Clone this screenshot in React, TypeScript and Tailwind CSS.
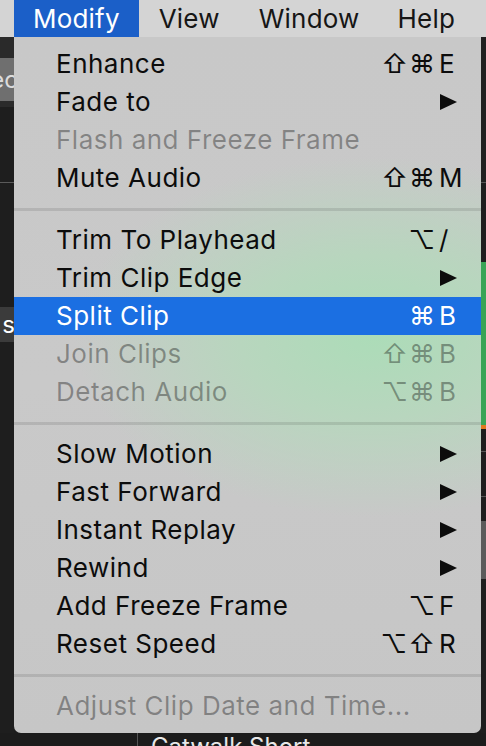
import React from "react";

type Item =
  | { kind: "item"; label: string; mods?: string; k?: string; arrow?: boolean; disabled?: boolean; active?: boolean }
  | { kind: "sep" };

const items: Item[] = [
  { kind: "item", label: "Enhance", mods: "⇧⌘", k: "E" },
  { kind: "item", label: "Fade to", arrow: true },
  { kind: "item", label: "Flash and Freeze Frame", disabled: true },
  { kind: "item", label: "Mute Audio", mods: "⇧⌘", k: "M" },
  { kind: "sep" },
  { kind: "item", label: "Trim To Playhead", mods: "⌥", k: "/" },
  { kind: "item", label: "Trim Clip Edge", arrow: true },
  { kind: "item", label: "Split Clip", mods: "⌘", k: "B", active: true },
  { kind: "item", label: "Join Clips", mods: "⇧⌘", k: "B", disabled: true },
  { kind: "item", label: "Detach Audio", mods: "⌥⌘", k: "B", disabled: true },
  { kind: "sep" },
  { kind: "item", label: "Slow Motion", arrow: true },
  { kind: "item", label: "Fast Forward", arrow: true },
  { kind: "item", label: "Instant Replay", arrow: true },
  { kind: "item", label: "Rewind", arrow: true },
  { kind: "item", label: "Add Freeze Frame", mods: "⌥", k: "F" },
  { kind: "item", label: "Reset Speed", mods: "⌥⇧", k: "R" },
  { kind: "sep" },
  { kind: "item", label: "Adjust Clip Date and Time...", disabled: true },
];

function Arrow() {
  return (
    <svg width="18" height="18" viewBox="0 0 18 18">
      <path d="M1 1 L18 9 L1 17 Z" fill="currentColor" />
    </svg>
  );
}

export default function App() {
  return (
    <div
      className="w-[486px] h-[746px] overflow-hidden bg-[#1c1c1c] flex flex-col"
      style={{ fontFamily: "Inter, 'DejaVu Sans', sans-serif" }}
    >
      {/* menubar */}
      <div className="h-[37px] shrink-0 bg-[#d4d4d4] flex text-[26px] leading-[37px] text-[#161616] pl-[14px] tracking-[0.2px]">
        <div className="px-[19px] bg-[#1b5fc8] text-white">Modify</div>
        <div className="px-[20px]">View</div>
        <div className="px-[19px]">Window</div>
        <div className="px-[19px]">Help</div>
      </div>

      <div className="flex h-[696px] shrink-0">
        {/* left strip */}
        <div className="w-[14px] shrink-0 flex flex-col">
          <div className="h-[21px] bg-[#2a2a2a]" />
          <div className="h-[43px] bg-[#6f6f6f] overflow-hidden flex items-center justify-end text-[24px] text-[#dcdcdc] leading-none">
            <span className="-mr-[4px]">ec</span>
          </div>
          <div className="h-[6px] bg-[#2b2b2b]" />
          <div className="h-[75px] bg-[#1e1e1e]" />
          <div className="h-px bg-[#5a5a5a]" />
          <div className="h-[124px] bg-[#1e1e1e]" />
          <div className="h-[35px] bg-[#3b3b3b] overflow-hidden flex items-center justify-end text-[24px] text-white leading-none">
            <span className="-mr-[1px]">s</span>
          </div>
          <div className="flex-1 bg-[#1e1e1e]" />
        </div>

        {/* menu */}
        <div className="w-[467px] shrink-0 rounded-b-[7px] overflow-hidden bg-[radial-gradient(ellipse_300px_180px_at_360px_300px,#acdcb8_0%,#b8d6be_45%,rgba(200,200,200,0)_100%),linear-gradient(180deg,#c8c8c8_0%,#c9c9c9_50%,#c6c6c6_100%)] pt-[8px] pb-[7px] text-[26px] tracking-[0.5px]">
          {items.map((it, i) =>
            it.kind === "sep" ? (
              <div key={i} className="h-[24px] flex items-center">
                <div className="h-[3px] w-full bg-black/10" />
              </div>
            ) : (
              <div
                key={i}
                className={
                  "h-[38px] flex items-center pl-[42px] pr-[20px] leading-none " +
                  (it.active ? "bg-[#1b6fe2] text-white" : it.disabled ? "text-black/35" : "text-[#0c0c0c]")
                }
              >
                <span className="flex-1 whitespace-nowrap">{it.label}</span>
                {it.mods !== undefined && <span className="text-right tracking-[1px]">{it.mods}</span>}
                <span className="w-[22px] ml-[3px] flex items-center">
                  {it.arrow ? <Arrow /> : it.k}
                </span>
              </div>
            )
          )}
        </div>

        {/* right strip */}
        <div className="w-[5px] shrink-0 flex flex-col">
          <div className="h-[145px] bg-[#202020]" />
          <div className="h-px bg-[#555]" />
          <div className="h-[79px] bg-[#1e1e1e]" />
          <div className="h-[163px] bg-[#39a456]" />
          <div className="h-[4px] bg-[#e0791f]" />
          <div className="h-[22px] bg-[#1e1e1e]" />
          <div className="h-px bg-[#555]" />
          <div className="h-[44px] bg-[#1e1e1e]" />
          <div className="h-px bg-[#555]" />
          <div className="h-[24px] bg-[#1e1e1e]" />
          <div className="h-[58px] bg-[#5b5b5b]" />
          <div className="flex-1 bg-[#1e1e1e]" />
        </div>
      </div>

      {/* bottom */}
      <div className="flex-1 flex bg-[#1c1c1c] overflow-hidden">
        <div className="w-[137px] shrink-0" />
        <div className="w-px bg-[#555]" />
        <div className="pl-[13px] text-[24px] leading-none text-[#e8e8e8] pt-[2px] whitespace-nowrap">Catwalk Short</div>
      </div>
    </div>
  );
}
